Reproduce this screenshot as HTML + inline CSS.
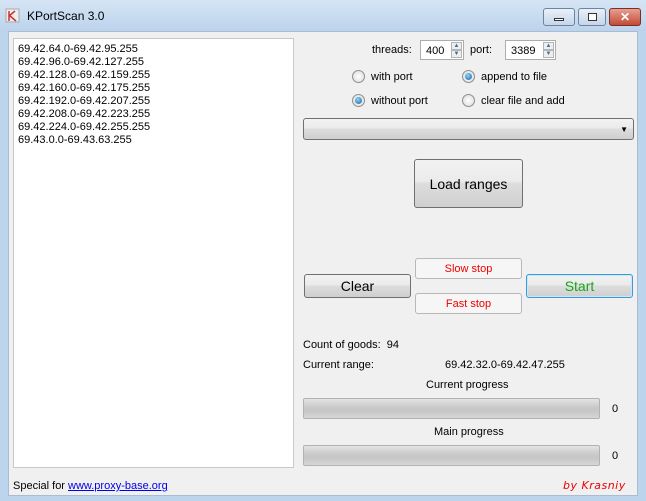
<!DOCTYPE html>
<html><head><meta charset="utf-8"><style>
*{box-sizing:border-box;margin:0;padding:0}
body{width:646px;height:501px;overflow:hidden;background:#bcd4ec;font-family:"Liberation Sans",sans-serif;font-size:11px;color:#000;position:relative}
.a{position:absolute}
.title{left:0;top:0;width:646px;height:31px;background:linear-gradient(#d6e5f5,#bcd3ec)}
.client{left:8px;top:31px;width:630px;height:465px;background:#f0f0f0;border:1px solid #a9bcd2}
.btn{position:absolute;border:1px solid #707070;border-radius:3px;background:linear-gradient(#f2f2f2 0%,#ebebeb 45%,#dddddd 50%,#cfcfcf 100%);display:flex;align-items:center;justify-content:center}
.wb{position:absolute;top:8px;height:18px;border:1px solid #6d84a0;border-radius:3px;background:linear-gradient(#e9f0f8,#c6d6ea)}
.radio{position:absolute;width:13px;height:13px;border-radius:50%;border:1px solid #8e8f8f;background:radial-gradient(#fff,#d8d8d8)}
.radio.on::after{content:"";position:absolute;left:2px;top:2px;width:7px;height:7px;border-radius:50%;background:radial-gradient(circle at 40% 35%,#8ad4ff,#1c5fa0)}
.spin{position:absolute;height:20px;border:1px solid #abadb3;background:#fff;padding:4px 0 0 5px}
.sb{position:absolute;right:1px;width:11px;height:8px;border:1px solid #b5b5b5;background:#eee;font-size:6px;line-height:6px;text-align:center;color:#3a6ea5}
.prog{position:absolute;left:303px;width:297px;height:21px;border:1px solid #b2b2b2;border-radius:2px;background:linear-gradient(#e4e4e4,#cbcbcb 40%,#c6c6c6 60%,#d6d6d6)}
</style></head><body>
<div class="a title"></div>
<svg class="a" style="left:5px;top:8px" width="16" height="16"><rect x="1" y="1" width="13" height="13" fill="#eee" stroke="#aaa"/><path d="M4 3v10M4 8l6-5M5 8l6 5" stroke="#c33" stroke-width="1.5" fill="none"/></svg>
<div class="a" style="left:27px;top:9px;font-size:12px;color:#000">KPortScan 3.0</div>
<div class="wb" style="left:543px;width:32px"><div class="a" style="left:10px;top:9px;width:10px;height:3px;background:#fff;border:1px solid #333"></div></div>
<div class="wb" style="left:578px;width:28px"><div class="a" style="left:9px;top:4px;width:9px;height:8px;border:1px solid #333;background:#fff"></div></div>
<div class="wb" style="left:609px;width:32px;background:linear-gradient(#e7a093,#c24a34);border-color:#7b2e23;color:#fff;font-weight:bold;font-size:12px;text-align:center;line-height:16px">✕</div>
<div class="a client"></div>
<div class="a" style="left:13px;top:38px;width:281px;height:430px;background:#fff;border:1px solid #c9c9c9;padding:4px 0 0 4px;line-height:13px">69.42.64.0-69.42.95.255<br>69.42.96.0-69.42.127.255<br>69.42.128.0-69.42.159.255<br>69.42.160.0-69.42.175.255<br>69.42.192.0-69.42.207.255<br>69.42.208.0-69.42.223.255<br>69.42.224.0-69.42.255.255<br>69.43.0.0-69.43.63.255</div>
<div class="a" style="left:372px;top:44px">threads:</div>
<div class="spin" style="left:420px;top:40px;width:44px">400<div class="sb" style="top:1px">▲</div><div class="sb" style="top:9px">▼</div></div>
<div class="a" style="left:470px;top:44px">port:</div>
<div class="spin" style="left:505px;top:40px;width:51px">3389<div class="sb" style="top:1px">▲</div><div class="sb" style="top:9px">▼</div></div>
<div class="radio" style="left:352px;top:70px"></div><div class="a" style="left:371px;top:71px">with port</div>
<div class="radio on" style="left:462px;top:70px"></div><div class="a" style="left:481px;top:71px">append to file</div>
<div class="radio on" style="left:352px;top:94px"></div><div class="a" style="left:371px;top:95px">without port</div>
<div class="radio" style="left:462px;top:94px"></div><div class="a" style="left:481px;top:95px">clear file and add</div>
<div class="btn" style="left:303px;top:118px;width:331px;height:22px;justify-content:flex-end;padding-right:5px;font-size:8px">▼</div>
<div class="btn" style="left:414px;top:159px;width:109px;height:49px;font-size:14px">Load ranges</div>
<div class="btn" style="left:304px;top:274px;width:107px;height:24px;font-size:14px">Clear</div>
<div class="btn" style="left:415px;top:258px;width:107px;height:21px;background:#f6f6f6;border-color:#b8b8b8;color:#e00;font-size:11px">Slow stop</div>
<div class="btn" style="left:415px;top:293px;width:107px;height:21px;background:#f6f6f6;border-color:#b8b8b8;color:#e00;font-size:11px">Fast stop</div>
<div class="btn" style="left:526px;top:274px;width:107px;height:24px;border-color:#3c9bd6;color:#1aa51a;font-size:14px;box-shadow:inset 0 0 0 1px #c6e8fb">Start</div>
<div class="a" style="left:303px;top:339px">Count of goods:&nbsp; 94</div>
<div class="a" style="left:303px;top:359px">Current range:</div>
<div class="a" style="left:445px;top:359px">69.42.32.0-69.42.47.255</div>
<div class="a" style="left:426px;top:379px">Current progress</div>
<div class="prog" style="top:398px"></div><div class="a" style="left:612px;top:403px">0</div>
<div class="a" style="left:434px;top:426px">Main progress</div>
<div class="prog" style="top:445px"></div><div class="a" style="left:612px;top:450px">0</div>
<div class="a" style="left:13px;top:480px">Special for <span style="color:#00e;text-decoration:underline">www.proxy-base.org</span></div>
<div class="a" style="left:563px;top:479px;color:#e00;font-family:'DejaVu Sans',sans-serif;font-style:italic;font-size:11px;letter-spacing:0.5px">by Krasniy</div>
</body></html>
